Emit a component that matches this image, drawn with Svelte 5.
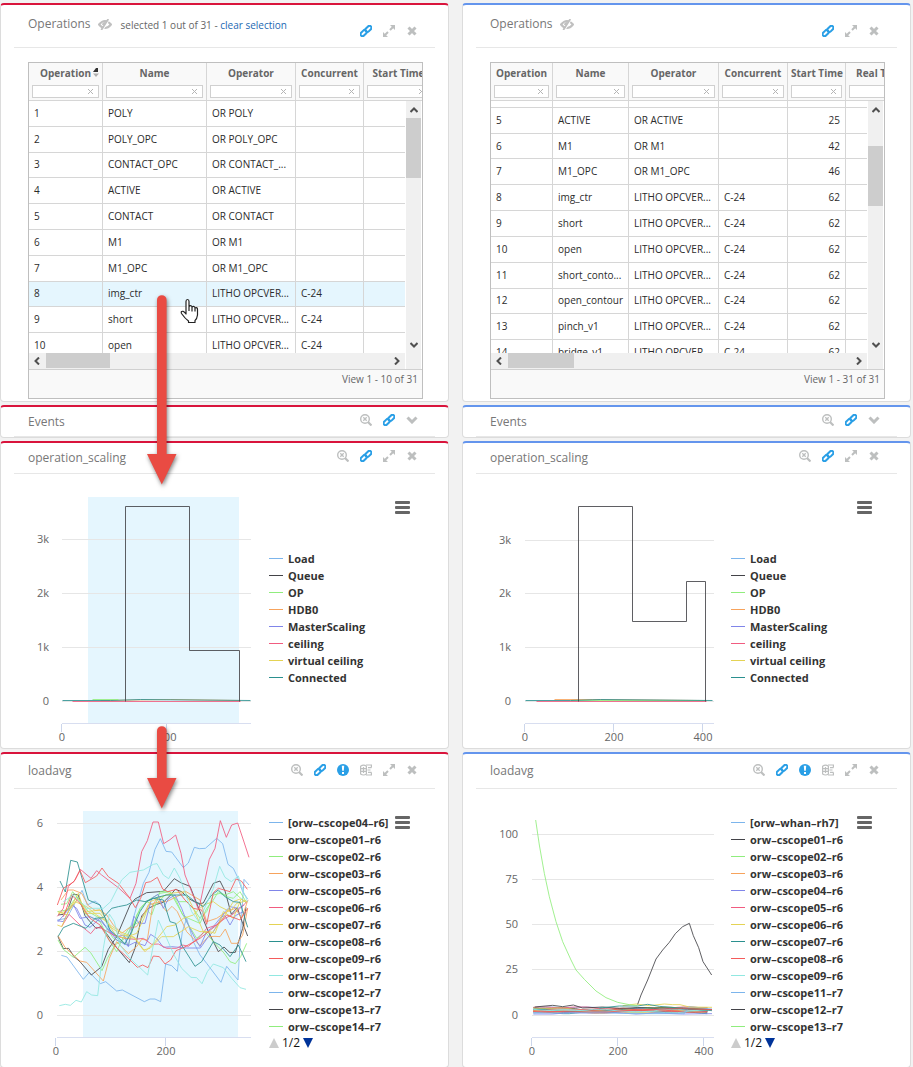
<script>
  const C = {
    blue: '#7cb5ec', dark: '#434348', green: '#90ed7d', orange: '#f7a35c', violet: '#8085e9',
    pink: '#f15c80', yellow: '#e4d354', teal: '#2b908f', red: '#f45b5b', aqua: '#91e8e1'
  };
  const palette = Object.values(C);
  const litho = 'LITHO OPCVER...';

  const scalingLegend = ['Load', 'Queue', 'OP', 'HDB0', 'MasterScaling', 'ceiling', 'virtual ceiling', 'Connected'];
  const hosts = (first, ids) => [first, ...ids.map((id) => `orw–cscope${id}`.replace('-', '–'))];

  const leftLoad = [
    ['blue', '184,631 201,636 250,703 268,682 301,716 317,710 350,738 367,735 433,770 450,762 465,762 482,770 497,657 515,662 532,679 547,560 560,520 580,590 600,630 620,655 663,712 680,664 714,705 722,560 732,403 747,420'],
    ['blue', '172,525 200,520 246,436 262,480 285,468 300,480 330,560 375,600 400,520 430,415 447,382 465,313 481,281 498,319 515,321 550,368 565,354 583,307 598,311 616,310 650,280 668,296 684,358 700,370 712,395 728,440 743,462'],
    ['dark', '174,510 190,508 205,490 220,447 235,450 255,512 270,530 288,550 304,545 330,580 350,608 388,653 405,610 425,513 445,490 470,478 490,472 510,452 526,433 545,440 565,460 583,470 600,476 610,474 640,415 660,408 675,438 694,508 712,488 728,535 743,573'],
    ['dark', '174,575 190,611 206,610 222,635 240,650 274,690 305,665 325,613 350,575 390,480 405,462 440,443 490,439 523,401 542,413 570,424 600,500 625,560 655,620 672,606 690,623 706,622 728,550 738,487'],
    ['green', '183,478 200,476 218,440 235,460 265,500 300,520 340,580 360,590 385,600 410,510 430,480 450,462 480,445 510,440 530,470 548,510 565,520 600,535 620,490 640,465 655,440 675,450 700,440 720,458 740,475'],
    ['green', '174,585 190,613 220,637 255,607 272,623 306,677 322,640 345,600 375,580 400,540 420,490 440,470 465,482 495,450 515,448 535,470 560,470 583,495 600,520 620,500 640,450 660,445 680,455 700,460 720,440 738,470'],
    ['green', '172,500 200,495 230,455 260,510 300,530 330,590 350,620 370,575 390,545 420,530 440,495 455,510 480,440 510,440 560,530 590,580 615,560 640,590 672,624 690,650 706,656 722,635 740,595'],
    ['orange', '183,465 205,435 220,435 245,445 265,482 285,496 300,495 320,510 340,540 365,565 385,550 410,545 430,510 445,480 480,470 500,470 520,460 540,450 555,438 575,450 600,465 620,530 650,520 680,500 706,490 725,520 743,467'],
    ['orange', '174,572 195,607 240,648 260,652 285,680 310,708 328,640 350,590 385,626 410,605 425,583 442,585 458,480 470,462 500,500 516,484 532,500 560,560 600,602 625,575 645,574 660,575 676,552 694,595 712,595 728,570 743,490'],
    ['violet', '172,527 190,530 215,480 230,490 255,540 270,547 300,520 325,555 350,575 372,570 385,605 402,514 418,535 435,535 455,460 474,448 490,490 505,462 525,450 545,490 560,530 585,580 600,605 620,560 640,545 664,515 675,512 690,540 706,512 730,500'],
    ['violet', '174,530 200,500 220,478 240,520 270,515 304,530 330,560 350,585 385,602 405,592 435,602 452,568 470,580 490,607 515,605 560,609 601,609 625,575 640,560 675,500 690,485 715,490 733,480'],
    ['pink', '172,514 190,490 205,425 225,405 241,373 273,400 290,377 305,390 355,428 390,460 408,415 425,320 442,287 459,231 475,231 491,296 510,284 527,270 543,325 555,390 575,440 596,495 612,420 628,343 645,310 661,227 679,277 695,240 713,234 730,285 747,337'],
    ['pink', '185,545 207,508 240,540 272,566 288,547 305,550 340,570 375,580 405,583 430,580 455,598 475,597 500,610 530,610 548,600 565,604 600,575 620,550 650,540 675,520 695,510 715,495 745,466'],
    ['yellow', '172,540 185,545 205,500 235,460 260,500 300,495 330,540 360,560 390,572 410,565 432,520 450,470 475,460 510,445 555,440 580,490 610,560 635,565 655,540 675,510 700,470 720,462 743,470'],
    ['yellow', '174,500 200,510 235,445 255,505 300,505 330,545 365,570 400,575 430,615 450,610 485,575 520,575 565,545 600,560 630,560 645,565 670,500 700,520 722,465'],
    ['yellow', '174,505 195,500 225,470 260,485 290,510 320,530 350,575 380,580 405,578 435,620 465,590 500,545 525,540 550,520 580,510 610,480 640,470 660,485 690,500 710,475 738,468'],
    ['teal', '180,408 196,441 212,346 232,351 265,465 300,480 330,555 375,596 395,560 420,500 440,470 460,460 490,465 510,530 527,535 545,600 585,664 605,650 640,590 660,600 690,635 715,600 738,650'],
    ['teal', '174,575 190,548 220,535 245,545 258,550 285,520 310,518 335,490 355,485 380,480 410,465 435,470 460,460 500,450 530,450 560,450 585,470 610,485 635,450 655,435 675,455 700,470 720,472 743,547'],
    ['red', '172,480 190,430 222,410 240,376 256,413 290,393 306,369 325,395 355,415 390,460 406,488 422,460 437,413 452,410 472,397 488,432 503,440 530,433 555,465 580,490 605,495 620,538 640,443 655,430 690,440 708,402 724,408 742,433'],
    ['red', '190,515 215,450 240,475 270,520 300,540 330,590 385,640 412,667 428,660 444,668 460,633 478,635 495,657 512,645 528,617 550,608 600,580 625,560 650,540 680,510 720,525 743,490'],
    ['aqua', '178,782 196,778 211,781 228,766 244,771 260,740 275,750 293,752 310,610 328,507 343,530 360,600 390,640 443,690 460,600 475,525 500,580 522,630 545,670 573,697 590,698 606,716 622,680 640,657 670,668 695,700 720,728 738,733'],
    ['aqua', '190,470 220,450 260,490 310,490 332,470 365,405 390,382 430,375 460,358 471,356 490,390 506,401 523,369 540,400 575,500 596,530 640,430 659,364 675,397 694,410 715,393 730,440 743,470']
  ];

  const bundle = palette.flatMap((color, i) => {
    const mk = (base, amp, ph) => {
      const pts = [];
      for (let x = 232; x <= 768; x += 18) {
        pts.push(`${x},${Math.round(base + amp * Math.sin(x / 70 + ph) + 2 * Math.sin(x / 23 + ph * 2))}`);
      }
      return pts.join(' ');
    };
    return [[color, mk(790 + (i % 5) * 2, 4, i * 1.3)], [color, mk(795 + (i % 4) * 2, 3, i * 2.1 + 1)]];
  });
  const rightLoad = [
    ...bundle,
    [C.violet, '232,807 290,807 340,803 400,804 480,803 540,807 600,804 680,807 768,806'],
    [C.blue, '232,804 320,804 420,803 540,806 685,806 700,785 768,792'],
    [C.dark, '236,786 290,781 320,785 352,780 380,789 440,786 490,790 545,788 640,789 768,794'],
    [C.yellow, '500,782 540,777 580,782 625,777 650,779 672,779 700,786 768,787'],
    [C.teal, '430,789 490,783 545,783 575,778 610,784 680,790 768,797'],
    [C.red, '232,799 340,800 450,801 560,794 680,791 768,794'],
    [C.green, '239,225 250,300 265,385 280,455 300,530 320,590 345,645 360,675 385,703 420,738 450,758 485,772 520,779 545,782'],
    [C.dark, '545,778 555,750 575,705 600,642 620,615 640,592 658,566 680,545 700,535 712,572 728,608 741,650 767,690']
  ];

  const sides = [
    {
      tone: 'crimson',
      selection: true,
      viewed: 'View 1 - 10 of 31',
      heads: [['Operation', 74], ['Name', 104], ['Operator', 89], ['Concurrent', 68], ['Start Time', 70]],
      sorted: true,
      rows: [
        ['1', 'POLY', 'OR POLY', '', ''], ['2', 'POLY_OPC', 'OR POLY_OPC', '', ''],
        ['3', 'CONTACT_OPC', 'OR CONTACT_...', '', ''], ['4', 'ACTIVE', 'OR ACTIVE', '', ''],
        ['5', 'CONTACT', 'OR CONTACT', '', ''], ['6', 'M1', 'OR M1', '', ''],
        ['7', 'M1_OPC', 'OR M1_OPC', '', ''], ['8', 'img_ctr', litho, 'C-24', ''],
        ['9', 'short', litho, 'C-24', ''], ['10', 'open', litho, 'C-24', '']
      ],
      picked: '8',
      thumbY: 0, thumbX: 64,
      scaling: {
        box: '1 474 264 274', left: 62, right: 251, labelX: 49, axis: 724, band: [88, 497, 151, 227],
        ys: [['3k', 539], ['2k', 593], ['1k', 647], ['0', 701]], xs: [['0', 62], ['200', 167]],
        scale: 1, ox: 0, oy: 0,
        lines: [
          [C.orange, '100,700 170,699 240,700'],
          [C.pink, '72,701 240,701'],
          [C.teal, '62,700 110,700 140,699 250,700'],
          [C.green, '92,699 118,699'],
          [C.dark, '125,701 125,506 189,506 189,650 239,650 239,701']
        ]
      },
      load: {
        box: '1 789 264 278', left: 57, right: 251, labelX: 43, axis: 1038, band: [83, 811, 155, 227],
        ys: [['6', 823], ['4', 887], ['2', 951], ['0', 1015]], xs: [['0', 56], ['200', 166]],
        scale: 1 / 3, ox: 0, oy: 745, lines: leftLoad.map(([c, p]) => [C[c], p])
      },
      loadLegend: hosts('[orw–cscope04–r6]', ['01-r6', '02-r6', '03-r6', '05-r6', '06-r6', '07-r6', '08-r6', '09-r6', '11-r7', '12-r7', '13-r7', '14-r7'])
    },
    {
      tone: 'azure',
      selection: false,
      viewed: 'View 1 - 31 of 31',
      heads: [['Operation', 62], ['Name', 76], ['Operator', 90], ['Concurrent', 69], ['Start Time', 58], ['Real Time', 70]],
      sorted: false,
      rows: [
        ['4', 'CONTACT', 'OR CONTACT', '', '0', ''],
        ['5', 'ACTIVE', 'OR ACTIVE', '', '25', ''], ['6', 'M1', 'OR M1', '', '42', ''],
        ['7', 'M1_OPC', 'OR M1_OPC', '', '46', ''], ['8', 'img_ctr', litho, 'C-24', '62', ''],
        ['9', 'short', litho, 'C-24', '62', ''], ['10', 'open', litho, 'C-24', '62', ''],
        ['11', 'short_conto...', litho, 'C-24', '62', ''], ['12', 'open_contour', litho, 'C-24', '62', ''],
        ['13', 'pinch_v1', litho, 'C-24', '62', ''], ['14', 'bridge_v1', litho, 'C-24', '62', '']
      ],
      picked: '',
      thumbY: 28, thumbX: 66,
      scaling: {
        box: '463 474 264 274', left: 525, right: 714, labelX: 511, axis: 724, band: null,
        ys: [['3k', 540], ['2k', 593], ['1k', 647], ['0', 701]], xs: [['0', 525], ['200', 614], ['400', 703]],
        scale: 1, ox: 0, oy: 0,
        lines: [
          [C.pink, '536,701 706,701'],
          [C.orange, '554,699 592,699 700,700'],
          [C.green, '570,700 706,700'],
          [C.teal, '525,700 570,700 600,699 712,700'],
          [C.dark, '578,701 578,506 632,506 632,621 686,621 686,581 705,581 705,701']
        ]
      },
      load: {
        box: '463 789 264 278', left: 532, right: 714, labelX: 518, axis: 1038, band: null,
        ys: [['100', 834], ['75', 879], ['50', 924], ['25', 969], ['0', 1015]], xs: [['0', 532], ['200', 618], ['400', 704]],
        scale: 1 / 3, ox: 456, oy: 745, lines: rightLoad
      },
      loadLegend: hosts('[orw–whan–rh7]', ['01-r6', '02-r6', '03-r6', '04-r6', '05-r6', '06-r6', '07-r6', '08-r6', '09-r6', '11-r7', '12-r7', '13-r7'])
    }
  ];
</script>

{#snippet icon(name)}
  <button class="tool" aria-label={name}>
    {#if name === 'link'}
      <svg width="12" height="12" viewBox="0 0 12 12" fill="none" stroke="#2a9fe6" stroke-width="2">
        <rect x="4.9" y="1.9" width="7" height="4" rx="2" transform="rotate(-45 8.4 3.9)" />
        <rect x="0.1" y="6.1" width="7" height="4" rx="2" transform="rotate(-45 3.6 8.1)" />
      </svg>
    {:else if name === 'expand'}
      <svg width="14" height="14" viewBox="0 0 14 14" fill="#bdbfbf" stroke="#bdbfbf">
        <path d="M8 6l3-3M6 8l-3 3" stroke-width="2" fill="none" />
        <path d="M8 1h5v5zM1 8v5h5z" stroke="none" />
      </svg>
    {:else if name === 'close'}
      <svg width="10" height="10" viewBox="0 0 10 10" stroke="#bdbfbf" stroke-width="3"><path d="M1.5 1.5l7 7M8.5 1.5l-7 7" /></svg>
    {:else if name === 'reset zoom'}
      <svg width="12" height="12" viewBox="0 0 12 12" fill="none" stroke="#bdbfbf">
        <circle cx="5" cy="5" r="4.300" stroke-width="1.400" />
        <path d="M3.300 3.300l3.400 3.400M6.700 3.300l-3.400 3.400" stroke-width="1.300" /><path d="M8 8l3.500 3.500" stroke-width="2.200" />
      </svg>
    {:else if name === 'alert'}
      <svg width="12" height="12" viewBox="0 0 12 12"><circle cx="6" cy="6" r="6" fill="#2a9fe6" /><path d="M4.800 1.800h2.400l-.4 5h-1.600zM5 8h2v2H5z" fill="#fff" /></svg>
    {:else if name === 'table'}
      <svg width="12" height="12" viewBox="0 0 12 12" fill="none" stroke="#bdbfbf" stroke-width="1.200">
        <path d="M.6 2.200q3-2 5.800 0v7.800q-2.800 2-5.800 0zM.6 4.600h5.800M.6 7.300h5.800M3.500 3v6" />
        <path d="M6 1h5.400v2.500M8 3.600h3.500M7.500 6h3M8 8.400h3.500M6 11h5.400V8.400" />
      </svg>
    {:else}
      <svg width="12" height="8" viewBox="0 0 12 8" fill="none" stroke="#bdbfbf" stroke-width="3"><path d="M1.500 1.500L6 6l4.500-4.500" /></svg>
    {/if}
  </button>
{/snippet}

{#snippet chev(dir)}
  <svg class="chev {dir}" width="8" height="8" viewBox="0 0 8 8" fill="none" stroke="#505050" stroke-width="2"><path d="M0.500 6L4 2.500L7.500 6" /></svg>
{/snippet}

{#snippet plot(c)}
  {@const size = c.box.split(' ')}
  <svg class="plot" width={size[2]} height={size[3]} viewBox={c.box}>
    {#if c.band}<rect x={c.band[0]} y={c.band[1]} width={c.band[2]} height={c.band[3]} fill="#e5f6fe" />{/if}
    {#each c.ys as [label, y]}
      <path d="M{c.left} {y + 0.5}H{c.right}" stroke="#e6e6e6" />
      <text x={c.labelX} y={y + 4} text-anchor="end">{label}</text>
    {/each}
    <path d="M{c.left} {c.axis - 0.5}H{c.right}" stroke="#d8def0" />
    {#each c.xs as [label, x]}
      <path d="M{x - 0.5} {c.axis}v8" stroke="#ccd6eb" />
      <text {x} y={c.axis + 17} text-anchor="middle">{label}</text>
    {/each}
    <g transform="translate({c.ox} {c.oy}) scale({c.scale})">
      {#each c.lines as [color, points]}
        <polyline {points} fill="none" stroke={color} stroke-opacity="0.85" stroke-linejoin="round" vector-effect="non-scaling-stroke" transform={c.scale === 1 ? 'translate(.5 .5)' : undefined} />
      {/each}
    </g>
  </svg>
{/snippet}

{#snippet legend(names)}
  <ul class="legend">
    {#each names as name, i}
      <li><i style="background: {palette[i % palette.length]}"></i>{name}</li>
    {/each}
  </ul>
{/snippet}

{#snippet menu()}
  <button class="menu" aria-label="Chart menu"><i></i><i></i><i></i></button>
{/snippet}

<main>
  {#each sides as s}
    <div class="column {s.tone}">
      <section class="panel">
        <header class="tall">
          <h2>Operations</h2>
          <svg class="eye" width="14" height="11" viewBox="0 0 14 11" fill="none" stroke="#c0c0c0">
            <path d="M1 5.500Q7-1.500 13 5.500Q7 12.500 1 5.500z" stroke-width="2" />
            <path d="M5 6a2 2 0 0 1 2-2.200" stroke-width="1.800" />
            <path d="M4.500 11.500L11.500 0" stroke="#fff" stroke-width="1.200" />
            <path d="M3.300 11L10.300 0" stroke-width="1.800" />
          </svg>
          {#if s.selection}
            <span class="chosen">selected 1 out of 31 - <a href="#clear">clear selection</a></span>
          {/if}
          <div class="tools">{@render icon('link')}{@render icon('expand')}{@render icon('close')}</div>
        </header>
        <div class="grid">
          <div class="clip head">
            <table>
              <colgroup>{#each s.heads as h}<col style="width: {h[1]}px" />{/each}</colgroup>
              <thead>
                <tr>
                  {#each s.heads as h, i}
                    <th>
                      {h[0]}
                      {#if s.sorted && i === 0}
                        <svg class="sort" width="6" height="9" viewBox="0 0 6 9"><path d="M0 4l3-4h2v4z" fill="#333" /><path d="M0 5.500h6L3 9z" fill="#b0b0b0" /></svg>
                      {/if}
                      <div class="filter"><input aria-label="Filter {h[0]}" /><button aria-label="Clear {h[0]}">
                        <svg width="5" height="5" viewBox="0 0 5 5" stroke="#b5b5b5"><path d="M0 0l5 5M5 0L0 5" /></svg>
                      </button></div>
                    </th>
                  {/each}
                </tr>
              </thead>
            </table>
          </div>
          <div class="scroller">
            <div class="rows" class:scrolled={!s.sorted}>
              <table>
                <colgroup>{#each s.heads as h}<col style="width: {h[1]}px" />{/each}</colgroup>
                <tbody>
                  {#each s.rows as r}
                    <tr class:picked={r[0] === s.picked}>
                      {#each r as cell, i}<td class:num={i === 4}>{cell}</td>{/each}
                    </tr>
                  {/each}
                </tbody>
              </table>
            </div>
            <div class="vbar">
              {@render chev('up')}
              <div class="lane"><div class="thumb" style="height: 60px; margin-top: {s.thumbY}px"></div></div>
              {@render chev('down')}
            </div>
            <div class="hbar">
              {@render chev('left')}
              <div class="lane"><div class="thumb" style="width: {s.thumbX}px"></div></div>
              {@render chev('right')}
            </div>
          </div>
          <footer>{s.viewed}</footer>
        </div>
      </section>

      <section class="panel">
        <header class="short">
          <h2>Events</h2>
          <div class="tools">{@render icon('reset zoom')}{@render icon('link')}{@render icon('open')}</div>
        </header>
      </section>

      <section class="panel">
        <header>
          <h2>operation_scaling</h2>
          <div class="tools">{@render icon('reset zoom')}{@render icon('link')}{@render icon('expand')}{@render icon('close')}</div>
        </header>
        <div class="chart">
          {@render plot(s.scaling)}
          <div class="key low">{@render legend(scalingLegend)}</div>
          {@render menu()}
        </div>
      </section>

      <section class="panel">
        <header class="mid">
          <h2>loadavg</h2>
          <div class="tools">
            {@render icon('reset zoom')}{@render icon('link')}{@render icon('alert')}{@render icon('table')}{@render icon('expand')}{@render icon('close')}
          </div>
        </header>
        <div class="chart">
          {@render plot(s.load)}
          <div class="key">
            {@render legend(s.loadLegend)}
            <div class="pager">
              <button aria-label="Previous page"><svg width="10" height="10" viewBox="0 0 10 10"><path d="M0 10L5 0l5 10z" fill="#ccc" /></svg></button>
              <span>1/2</span>
              <button aria-label="Next page"><svg width="10" height="10" viewBox="0 0 10 10"><path d="M0 0h10L5 10z" fill="#003399" /></svg></button>
            </div>
          </div>
          {@render menu()}
        </div>
      </section>
    </div>
  {/each}

  <svg class="overlay" width="60" height="540" viewBox="145 290 60 540" aria-hidden="true">
    <g fill="#e94b43">
      <path d="M157 300a4.800 4.800 0 0 1 9.600 0V454H176.500L161.800 484.500L147 454H157z" />
      <path d="M157 731a4.800 4.800 0 0 1 9.600 0V778H176.500L161.800 808.500L147 778H157z" />
    </g>
    <path class="hand" d="M186 312V301.500Q186 299.500 187.500 299.500T189 301.500V306.500Q191.500 304.700 192 307Q194.500 305.500 195 308Q197.500 307 197.500 309.500V315Q197 319 195 320.500V322.500H188.500V321Q185 318.500 181.500 313.500Q180.500 311 183 311.300Q184.500 312 186 314zM189 306.500V311M192 307V311.500M195 308V311.500" fill="#fff" stroke="#222" stroke-width="1.200" stroke-linejoin="round" />
  </svg>
</main>

<style>
  :global(body) { background: #f2f2f2; }
  main {
    position: relative;
    box-sizing: border-box;
    height: 100vh;
    overflow: hidden;
    display: grid;
    grid-template-columns: 1fr 1fr;
    gap: 13px;
    padding: 3px 2px 0 0;
    font-family: "Open Sans", sans-serif;
    font-size: 10px;
    color: #666;
  }
  button { padding: 0; border: 0; background: none; font: inherit; color: inherit; cursor: pointer; }
  svg { display: block; flex: none; }
  .column { display: flex; flex-direction: column; gap: 3px; min-width: 0; }
  .crimson { --tone: #d9143c; }
  .azure { --tone: #6495ed; }
  .panel {
    background: #fff;
    border: 1px solid #dcdcdc;
    border-top: 2px solid var(--tone);
    border-radius: 4px;
    flex: none;
  }
  header {
    display: flex;
    align-items: center;
    height: 30px;
    margin: 0 13px;
    padding: 0 12px 0 14px;
    border-bottom: 1px solid #e7e7e7;
  }
  header.short { height: 29px; }
  header.mid { height: 34px; }
  header.tall { height: 42px; }
  h2 { margin: 0; font-size: 12px; line-height: 18px; font-weight: 400; color: #777; }
  .tall h2, .eye { margin-bottom: 4px; }
  .eye { margin-left: 7px; }
  .chosen { margin: 0 0 2px 9px; }
  .chosen a { color: #1c68b3; text-decoration: none; }
  .tools { display: flex; margin-left: auto; padding-bottom: 4px; }
  .mid .tools { padding-bottom: 2px; }
  .tall .tools { padding: 10px 0 0; }
  .tool { width: 23px; height: 14px; display: grid; place-items: center; }

  .grid { margin: 14px 25px 2px 27px; border: 1px solid #bfbfbf; }
  .clip { overflow: hidden; background: #f9f9f9; border-bottom: 1px solid #d6d6d6; }
  table { border-collapse: separate; border-spacing: 0; table-layout: fixed; width: 0; }
  th {
    position: relative;
    height: 37px;
    padding: 0 3px;
    box-sizing: border-box;
    border-right: 1px solid #d6d6d6;
    font-weight: 700;
    line-height: 20px;
    vertical-align: top;
    white-space: nowrap;
  }
  .sort { position: absolute; right: 3px; top: 5px; }
  .filter { display: flex; align-items: center; height: 11px; margin-top: 2px; border: 1px solid #d0d0d0; background: #fff; }
  .filter input { flex: 1; min-width: 0; height: 11px; padding: 0; border: 0; background: none; font: inherit; outline: 0; }
  .filter button { padding-right: 5px; }
  .scroller { display: grid; grid-template-columns: 1fr 15px; grid-template-rows: 252px 16px; column-gap: 1px; padding-right: 1px; }
  .rows { overflow: hidden; min-width: 0; }
  .rows table { height: 258px; }
  .scrolled table { height: 284px; margin-top: -19px; }
  td {
    padding: 0 5px;
    border-right: 1px solid #d6d6d6;
    border-bottom: 1px solid #d6d6d6;
    color: #2b2b2b;
    line-height: 15px;
    white-space: nowrap;
    overflow: hidden;
  }
  .num { text-align: right; }
  .picked td { background: #e5f6fe; }
  .vbar { grid-column: 2; grid-row: 1 / 3; display: flex; flex-direction: column; align-items: center; padding: 5px 0 20px; background: #f0f0f0; }
  .hbar { display: flex; align-items: center; padding: 0 4px; background: #f0f0f0; }
  .lane { flex: 1; margin: 4px 0; align-self: stretch; }
  .vbar .thumb { width: 15px; }
  .hbar .lane { margin: 0 5px; }
  .thumb { background: #cdcdcd; height: 15px; }
  .down { transform: rotate(180deg); }
  .left { transform: rotate(-90deg); }
  .right { transform: rotate(90deg); }
  footer { height: 28px; padding: 0 4px; border-top: 1px solid #d0d0d0; background: #f9f9f9; line-height: 18px; text-align: right; }

  .chart { display: flex; align-items: flex-start; }
  .plot text { font-size: 11px; fill: #666; }
  .key { flex: 1; padding: 25px 0 0 4px; }
  .key.low { padding-top: 76px; }
  .legend { margin: 0; padding: 0; list-style: none; font-size: 11px; font-weight: 700; color: #333; }
  .legend li { display: flex; align-items: center; gap: 5px; line-height: 17px; white-space: nowrap; }
  .legend i { width: 14px; height: 1px; }
  .pager { display: flex; align-items: center; gap: 3px; line-height: 16px; font-size: 12px; color: #111; }
  .menu { display: grid; gap: 2px; width: 15px; margin: 27px 38px 0 0; }
  .menu i { height: 3px; border-radius: 1px; background: #666; }
  .overlay { position: absolute; left: 145px; top: 290px; pointer-events: none; }
  .overlay g { filter: drop-shadow(1px 2px 2px rgba(0, 0, 0, 0.5)); }
</style>
